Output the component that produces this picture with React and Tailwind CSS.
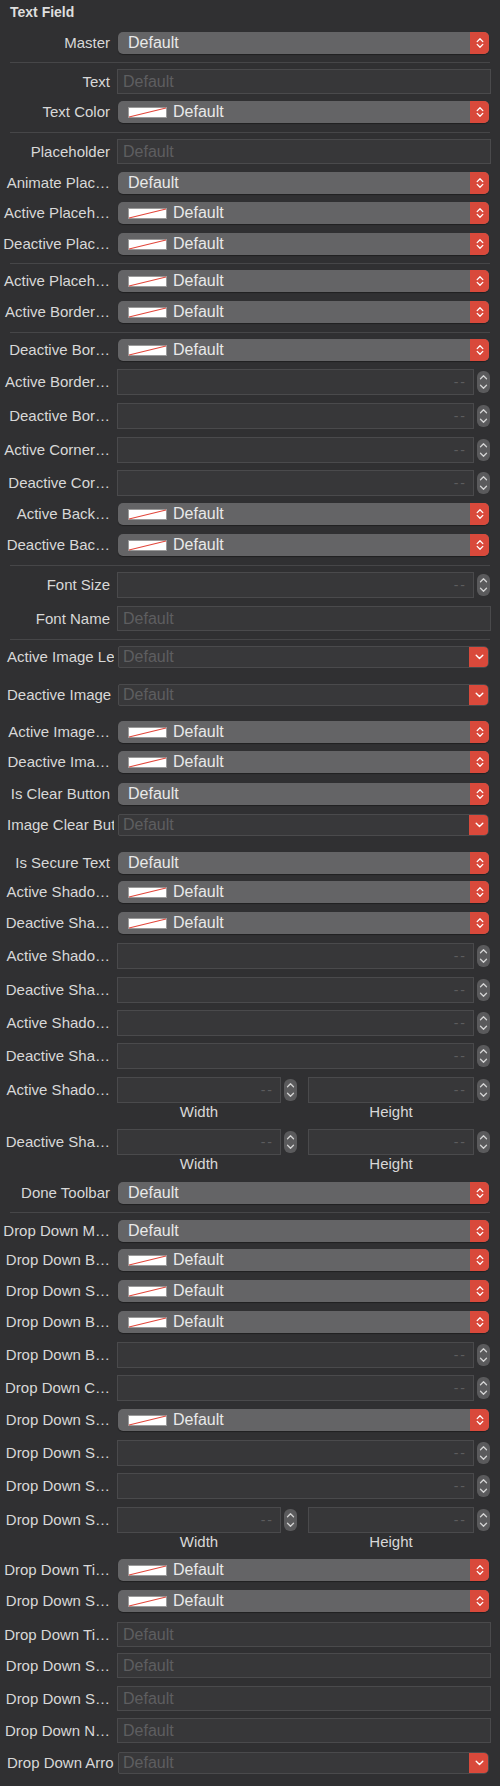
import React from "react";

const UpDown = ({ color = "#ffffff" }) => (
  <svg width="8" height="12" viewBox="0 0 8 12">
    <path d="M1.2 4.6 L4 1.8 L6.8 4.6 M1.2 7.4 L4 10.2 L6.8 7.4" stroke={color} strokeWidth="1.3" fill="none" strokeLinecap="round" strokeLinejoin="round" />
  </svg>
);

const Down = () => (
  <svg width="9" height="6" viewBox="0 0 9 6">
    <path d="M1.2 1.2 L4.5 4.5 L7.8 1.2" stroke="#ffffff" strokeWidth="1.4" fill="none" strokeLinecap="round" strokeLinejoin="round" />
  </svg>
);

const Swatch = () => (
  <svg width="39" height="11" viewBox="0 0 39 11" className="shrink-0">
    <rect x="0.5" y="0.5" width="38" height="10" fill="#ffffff" stroke="#9a9a9a" strokeWidth="1" />
    <line x1="1" y1="10" x2="38" y2="1" stroke="#e2483d" strokeWidth="1.1" />
  </svg>
);

const Label = ({ children, clip }) =>
  clip ? (
    <div className="w-[114px] shrink-0 overflow-hidden whitespace-nowrap pl-[7px] text-[15px] text-[#d8d8d8]">{children}</div>
  ) : (
    <div className="w-[110px] shrink-0 whitespace-nowrap text-right text-[15px] text-[#d8d8d8]">{children}</div>
  );

const Stepper = () => (
  <div className="ml-[3px] flex h-[22px] w-[13px] shrink-0 flex-col items-center justify-center rounded-[6px] bg-[#5a5a5c]">
    <svg width="9" height="16" viewBox="0 0 9 16">
      <path d="M1.5 4.8 L4.5 1.8 L7.5 4.8 M1.5 11.2 L4.5 14.2 L7.5 11.2" stroke="#d4d4d4" strokeWidth="1.3" fill="none" strokeLinecap="round" strokeLinejoin="round" />
    </svg>
  </div>
);

const Dashes = () => <span className="text-[14px] tracking-[2px] text-[#5c5c5e]">--</span>;

function Popup({ mt, label, color }) {
  return (
    <div className={`flex h-[22px] items-center ${mt}`}>
      <Label>{label}</Label>
      <div className="ml-[8px] flex h-[22px] w-[371px] overflow-hidden rounded-[5px] bg-[#646466] shadow-[0_1px_1px_rgba(0,0,0,0.35)]">
        <div className="flex flex-1 items-center gap-[6px] pl-[10px] text-[16px] text-[#e9e9e9]">
          {color && <Swatch />}
          <span>Default</span>
        </div>
        <div className="flex w-[19px] items-center justify-center bg-[#d9493b]">
          <UpDown />
        </div>
      </div>
    </div>
  );
}

function TextField({ mt, label }) {
  return (
    <div className={`flex h-[25px] items-center ${mt}`}>
      <Label>{label}</Label>
      <div className="ml-[7px] flex h-[25px] w-[374px] items-center border border-[#4a4a4c] bg-[#373739] pl-[5px] text-[16px] text-[#5e5e60]">
        Default
      </div>
    </div>
  );
}

function StepRow({ mt, label }) {
  return (
    <div className={`flex h-[26px] items-center ${mt}`}>
      <Label>{label}</Label>
      <div className="ml-[7px] flex h-[26px] w-[357px] items-center justify-end border border-[#4a4a4c] bg-[#373739] pr-[6px]">
        <Dashes />
      </div>
      <Stepper />
    </div>
  );
}

function WHRow({ mt, label }) {
  return (
    <div className={mt}>
      <div className="flex h-[26px] items-center">
        <Label>{label}</Label>
        <div className="ml-[7px] flex h-[26px] w-[164px] items-center justify-end border border-[#4a4a4c] bg-[#373739] pr-[6px]">
          <Dashes />
        </div>
        <Stepper />
        <div className="ml-[11px] flex h-[26px] w-[166px] items-center justify-end border border-[#4a4a4c] bg-[#373739] pr-[6px]">
          <Dashes />
        </div>
        <Stepper />
      </div>
      <div className="flex h-[18px] items-center text-[15px] text-[#d8d8d8]">
        <div className="w-[117px] shrink-0" />
        <div className="w-[164px] text-center">Width</div>
        <div className="w-[27px] shrink-0" />
        <div className="w-[166px] text-center">Height</div>
      </div>
    </div>
  );
}

function Combo({ mt, label }) {
  return (
    <div className={`flex h-[22px] items-center ${mt}`}>
      <Label clip>{label}</Label>
      <div className="ml-[4px] flex h-[22px] w-[371px] overflow-hidden rounded-r-[5px] rounded-l-[2px] border border-[#4a4a4c] bg-[#38383a]">
        <div className="flex flex-1 items-center pl-[4px] text-[16px] text-[#5e5e60]">Default</div>
        <div className="-my-px -mr-px flex w-[20px] items-center justify-center rounded-r-[5px] bg-[#d9493b]">
          <Down />
        </div>
      </div>
    </div>
  );
}

const Sep = ({ mt }) => <div className={`mx-[10px] h-px bg-[#464648] ${mt}`} />;

export default function App() {
  return (
    <div className="min-h-[1786px] w-[500px] bg-[#303032] font-['Liberation_Sans',Arial,sans-serif] leading-[18px]">
      <div className="pl-[10px] pt-[2px] text-[14px] font-bold leading-[20px] text-[#dedede]">Text Field</div>

      <Popup mt="mt-[10px]" label="Master" />
      <Sep mt="mt-[8px]" />
      <TextField mt="mt-[6px]" label="Text" />
      <Popup mt="mt-[7px]" label="Text Color" color />
      <Sep mt="mt-[9px]" />
      <TextField mt="mt-[6px]" label="Placeholder" />
      <Popup mt="mt-[8px]" label="Animate Plac…" />
      <Popup mt="mt-[8px]" label="Active Placeh…" color />
      <Popup mt="mt-[9px]" label="Deactive Plac…" color />
      <Sep mt="mt-[8px]" />
      <Popup mt="mt-[6px]" label="Active Placeh…" color />
      <Popup mt="mt-[9px]" label="Active Border…" color />
      <Sep mt="mt-[9px]" />
      <Popup mt="mt-[6px]" label="Deactive Bor…" color />
      <StepRow mt="mt-[8px]" label="Active Border…" />
      <StepRow mt="mt-[8px]" label="Deactive Bor…" />
      <StepRow mt="mt-[8px]" label="Active Corner…" />
      <StepRow mt="mt-[7px]" label="Deactive Cor…" />
      <Popup mt="mt-[7px]" label="Active Back…" color />
      <Popup mt="mt-[9px]" label="Deactive Bac…" color />
      <Sep mt="mt-[9px]" />
      <StepRow mt="mt-[6px]" label="Font Size" />
      <TextField mt="mt-[8px]" label="Font Name" />
      <Sep mt="mt-[8px]" />
      <Combo mt="mt-[6px]" label="Active Image Le" />
      <Combo mt="mt-[16px]" label="Deactive Image" />
      <Popup mt="mt-[15px]" label="Active Image…" color />
      <Popup mt="mt-[8px]" label="Deactive Ima…" color />
      <Popup mt="mt-[10px]" label="Is Clear Button" />
      <Combo mt="mt-[9px]" label="Image Clear But" />
      <Popup mt="mt-[16px]" label="Is Secure Text" />
      <Popup mt="mt-[7px]" label="Active Shado…" color />
      <Popup mt="mt-[9px]" label="Deactive Sha…" color />
      <StepRow mt="mt-[9px]" label="Active Shado…" />
      <StepRow mt="mt-[8px]" label="Deactive Sha…" />
      <StepRow mt="mt-[7px]" label="Active Shado…" />
      <StepRow mt="mt-[7px]" label="Deactive Sha…" />
      <WHRow mt="mt-[8px]" label="Active Shado…" />
      <WHRow mt="mt-[8px]" label="Deactive Sha…" />
      <Popup mt="mt-[9px]" label="Done Toolbar" />
      <Sep mt="mt-[8px]" />
      <Popup mt="mt-[7px]" label="Drop Down M…" />
      <Popup mt="mt-[7px]" label="Drop Down B…" color />
      <Popup mt="mt-[9px]" label="Drop Down S…" color />
      <Popup mt="mt-[9px]" label="Drop Down B…" color />
      <StepRow mt="mt-[9px]" label="Drop Down B…" />
      <StepRow mt="mt-[7px]" label="Drop Down C…" />
      <Popup mt="mt-[8px]" label="Drop Down S…" color />
      <StepRow mt="mt-[9px]" label="Drop Down S…" />
      <StepRow mt="mt-[7px]" label="Drop Down S…" />
      <WHRow mt="mt-[8px]" label="Drop Down S…" />
      <Popup mt="mt-[8px]" label="Drop Down Ti…" color />
      <Popup mt="mt-[9px]" label="Drop Down S…" color />
      <TextField mt="mt-[10px]" label="Drop Down Ti…" />
      <TextField mt="mt-[6px]" label="Drop Down S…" />
      <TextField mt="mt-[8px]" label="Drop Down S…" />
      <TextField mt="mt-[7px]" label="Drop Down N…" />
      <Combo mt="mt-[9px]" label="Drop Down Arro" />
    </div>
  );
}
